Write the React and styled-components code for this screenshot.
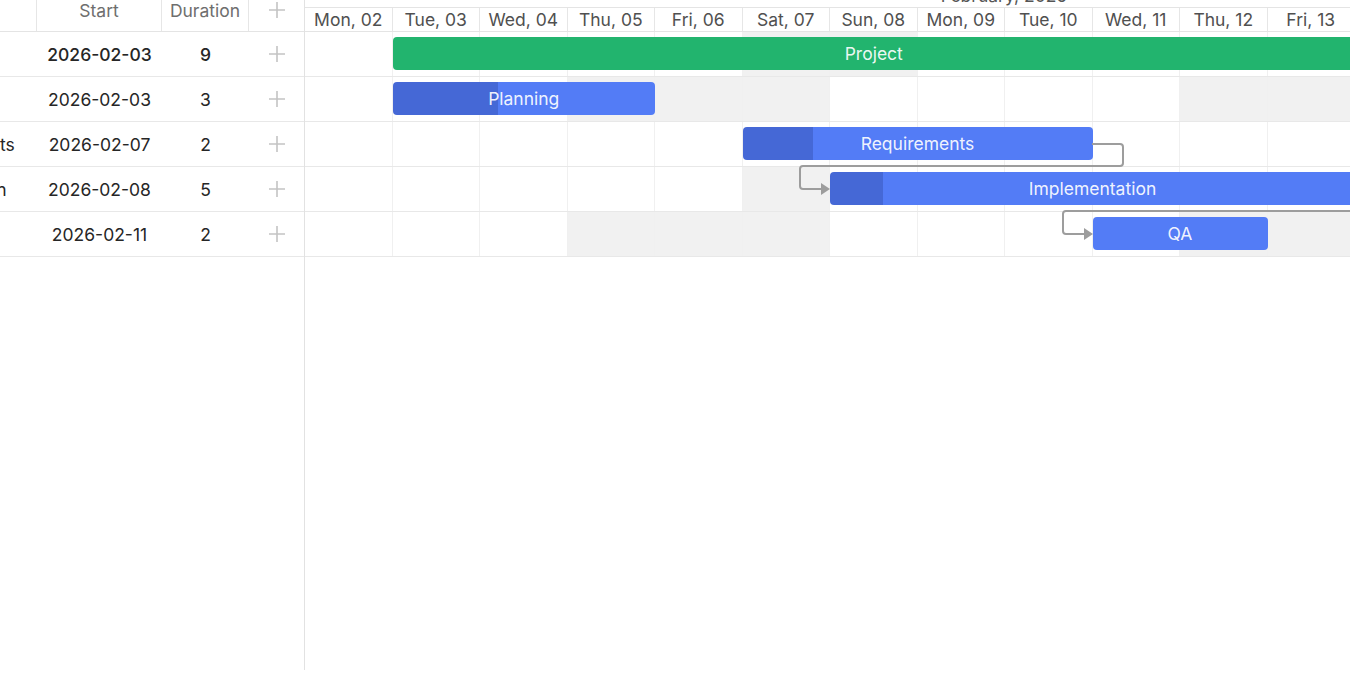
import React from "react";
import styled, { createGlobalStyle } from "styled-components";

const DAY = 87.5;

const days = [
  "Mon, 02", "Tue, 03", "Wed, 04", "Thu, 05", "Fri, 06", "Sat, 07",
  "Sun, 08", "Mon, 09", "Tue, 10", "Wed, 11", "Thu, 12", "Fri, 13",
];

// from / span are day columns, shaded = columns with the grey fill
const tasks = [
  { id: 1, name: "Project", start: "2026-02-03", duration: 9, from: 1, span: 11, progress: 0, parent: true, depth: 0, shaded: [5, 6] },
  { id: 2, name: "Planning", start: "2026-02-03", duration: 3, from: 1, span: 3, progress: 40, depth: 1, shaded: [3, 4, 5, 10, 11] },
  { id: 3, name: "Requirements", start: "2026-02-07", duration: 2, from: 5, span: 4, progress: 20, depth: 1, shaded: [] },
  { id: 4, name: "Implementation", start: "2026-02-08", duration: 5, from: 6, span: 6, progress: 10, depth: 0, shaded: [5] },
  { id: 5, name: "QA", start: "2026-02-11", duration: 2, from: 9, span: 2, progress: 0, depth: 1, shaded: [3, 4, 5, 10, 11] },
];

const GlobalStyle = createGlobalStyle`
  html, body {
    margin: 0;
    background: #ffffff;
    overflow: hidden;
  }
  body {
    font-family: Inter, "Noto Sans", sans-serif;
    font-size: 17.5px;
    color: #262626;
  }
`;

const Gantt = styled.div`
  display: flex;
  height: 670px;
  width: 100vw;
  overflow: hidden;
`;

const GridPanel = styled.div`
  width: 305px;
  flex: none;
  border-right: 1px solid #e2e2e2;
  box-sizing: border-box;
  display: flex;
  flex-direction: column;
  align-items: flex-end;
  overflow: hidden;
`;

const HeaderBar = styled.div`
  height: 32px;
  flex: none;
  box-sizing: border-box;
  border-bottom: 1px solid #e4e4e4;
  display: flex;
  flex-direction: ${(p) => (p.$stack ? "column" : "row")};
  justify-content: flex-end;
  align-items: ${(p) => (p.$stack ? "stretch" : "flex-end")};
  overflow: hidden;
`;

const HeadCell = styled.div`
  width: ${(p) => p.$w}px;
  flex: none;
  height: 42px;
  box-sizing: border-box;
  padding-left: ${(p) => (p.$left ? 12 : 0)}px;
  border-right: ${(p) => (p.$last ? "none" : "1px solid #e6e6e6")};
  display: flex;
  align-items: center;
  justify-content: ${(p) => (p.$left ? "flex-start" : "center")};
  color: #6e6e6e;
  white-space: nowrap;
`;

const GridRow = styled.div`
  display: flex;
  height: 45px;
  flex: none;
  box-sizing: border-box;
  border-bottom: 1px solid #e8e8e8;
`;

const Cell = styled.div`
  width: ${(p) => p.$w}px;
  flex: none;
  display: flex;
  align-items: center;
  justify-content: ${(p) => (p.$left ? "flex-start" : "center")};
  padding-left: ${(p) => p.$indent || 0}px;
  box-sizing: border-box;
  font-weight: ${(p) => (p.$bold ? 500 : 400)};
  color: #262626;
  white-space: nowrap;
`;

const Timeline = styled.div`
  flex: 1;
  display: flex;
  flex-direction: column;
  overflow: hidden;
`;

const MonthRow = styled.div`
  height: 23px;
  flex: none;
  border-bottom: 1px solid #e4e4e4;
  display: flex;
  overflow: hidden;
`;

const MonthCell = styled.div`
  width: 1398px;
  flex: none;
  text-align: center;
  line-height: 23px;
  color: #555555;
`;

const DayRow = styled.div`
  height: 23px;
  flex: none;
  display: flex;
`;

const DayCell = styled.div`
  width: ${DAY}px;
  flex: none;
  box-sizing: border-box;
  border-right: 1px solid #e6e6e6;
  text-align: center;
  line-height: 24px;
  color: #505050;
  white-space: nowrap;
`;

const Body = styled.div`
  position: relative;
  display: flex;
  flex-direction: column;
`;

const TrackRow = styled.div`
  display: grid;
  grid-template-columns: repeat(12, ${DAY}px);
  height: 45px;
  box-sizing: border-box;
  border-bottom: 1px solid #e8e8e8;
`;

const DayBox = styled.div`
  grid-row: 1;
  grid-column: ${(p) => p.$col + 1};
  border-right: 1px solid #f0f0f0;
  background: ${(p) => (p.$shaded ? "#f1f1f1" : "transparent")};
`;

const Bar = styled.div`
  grid-row: 1;
  grid-column: ${(p) => p.$from + 1} / span ${(p) => p.$span};
  align-self: center;
  height: 33px;
  margin-top: -1px;
  border-radius: 4px;
  background: ${(p) =>
    p.$parent
      ? "#22b46e"
      : `linear-gradient(to right, #4568d6 ${p.$progress}%, #537cf6 ${p.$progress}%)`};
  display: flex;
  align-items: center;
  justify-content: center;
  color: rgba(255, 255, 255, 0.93);
  white-space: nowrap;
  overflow: hidden;
`;

const Links = styled.svg`
  position: absolute;
  left: 0;
  top: 0;
  overflow: visible;
  pointer-events: none;
`;

const PlusIcon = () => (
  <svg width="18" height="18" viewBox="0 0 18 18">
    <path d="M9 1v16M1 9h16" stroke="#c4c4c4" strokeWidth="1.6" />
  </svg>
);

const cols = [
  { key: "name", title: "Task name", w: 160 },
  { key: "start", title: "Start", w: 125 },
  { key: "duration", title: "Duration", w: 87 },
  { key: "add", title: "", w: 55 },
];

const App = () => {
  return (
    <>
      <GlobalStyle />
      <Gantt>
        <GridPanel>
          <HeaderBar>
            {cols.map((c, i) => (
              <HeadCell
                key={c.key}
                $w={c.w}
                $left={c.key === "name"}
                $last={i === cols.length - 1}
              >
                {c.key === "add" ? <PlusIcon /> : c.title}
              </HeadCell>
            ))}
          </HeaderBar>
          {tasks.map((t) => (
            <GridRow key={t.id}>
              <Cell $w={160} $left $indent={2 + t.depth * 22} $bold={t.parent}>
                {t.name}
              </Cell>
              <Cell $w={125} $bold={t.parent}>{t.start}</Cell>
              <Cell $w={87} $bold={t.parent}>{t.duration}</Cell>
              <Cell $w={55}>
                <PlusIcon />
              </Cell>
            </GridRow>
          ))}
        </GridPanel>

        <Timeline>
          <HeaderBar $stack>
            <MonthRow>
              <MonthCell>February, 2026</MonthCell>
            </MonthRow>
            <DayRow>
              {days.map((d) => (
                <DayCell key={d}>{d}</DayCell>
              ))}
            </DayRow>
          </HeaderBar>

          <Body>
            {tasks.map((t) => (
              <TrackRow key={t.id}>
                {days.map((d, i) => (
                  <DayBox key={d} $col={i} $shaded={t.shaded.includes(i)} />
                ))}
                <Bar
                  $from={t.from}
                  $span={t.span}
                  $parent={t.parent}
                  $progress={t.progress}
                >
                  {t.name}
                </Bar>
              </TrackRow>
            ))}

            {/* dependency arrows: Requirements -> Implementation -> QA */}
            <Links width="1100" height="230">
              <g fill="none" stroke="#9d9d9d" strokeWidth="2" strokeLinejoin="round">
                <path d="M787 112 H815 Q818 112 818 115 V131 Q818 134 815 134 H498 Q495 134 495 137 V154 Q495 157 498 157 H517" />
                <path d="M1075 157 V176 Q1075 179 1072 179 H761 Q758 179 758 182 V199 Q758 202 761 202 H780" />
              </g>
              <g fill="#9d9d9d">
                <polygon points="516,151 525,157 516,163" />
                <polygon points="779,196 788,202 779,208" />
              </g>
            </Links>
          </Body>
        </Timeline>
      </Gantt>
    </>
  );
};

export default App;
